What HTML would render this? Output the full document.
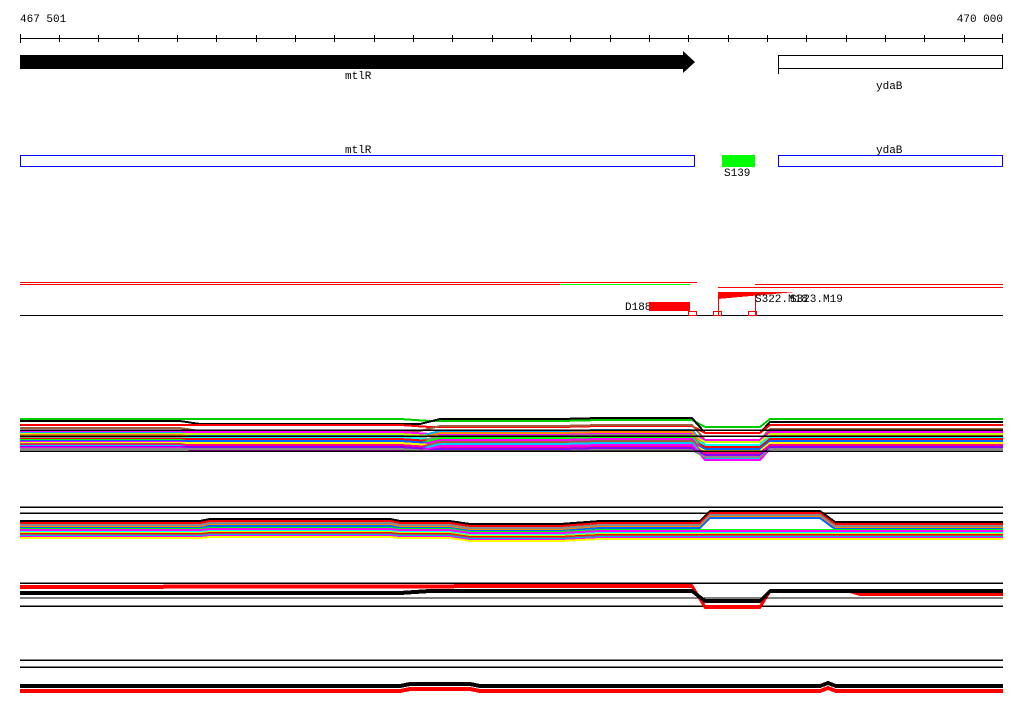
<!DOCTYPE html>
<html><head><meta charset="utf-8"><style>
html,body{margin:0;padding:0;background:#fff;width:1024px;height:714px;overflow:hidden}
svg{display:block}
text{font-family:"Liberation Mono","DejaVu Sans Mono",monospace;font-size:11px;fill:#000}
</style></head><body>
<svg width="1024" height="714" viewBox="0 0 1024 714" xmlns="http://www.w3.org/2000/svg" shape-rendering="crispEdges">
<defs>
<path id="a" d="M20,0 L180,0 L200,3 L420,3 L440,-2 L560,-2 L600,-3 L692,-3 L705,12 L760,12 L770,1 L1003,1" fill="none"/>
<path id="b" d="M20,0 L400,0 L430,2 L560,2 L600,1 L692,1 L705,8 L760,8 L770,0 L1003,0" fill="none"/>
<path id="c" d="M20,0 L200,0 L210,-2 L390,-2 L400,0 L450,0 L470,3 L560,3 L600,0 L700,0 L710,-10 L820,-10 L835,1 L1003,1" fill="none"/>
<path id="c2" d="M20,0 L200,0 L210,-1 L390,-1 L400,0 L450,0 L470,3 L560,3 L600,1 L1003,1" fill="none"/>
<path id="d" d="M20,0 L600,-1 L692,-1 L705,20 L760,20 L770,4 L850,4 L860,7 L1003,7" fill="none"/>
<path id="d2" d="M20,0 L400,0 L430,-2 L692,-2 L705,8 L760,8 L770,-2 L1003,-2" fill="none"/>
<path id="e" d="M20,0 L400,0 L410,-2 L470,-2 L480,0 L820,0 L828,-3 L836,0 L1003,0" fill="none"/>
</defs>
<!-- ruler -->
<text x="20" y="22">467 501</text>
<text x="1003" y="22" text-anchor="end">470 000</text>
<line x1="20" y1="38.5" x2="1003" y2="38.5" stroke="#000"/>
<g stroke="#000">
<line x1="20.5" y1="34" x2="20.5" y2="43"/><line x1="59.5" y1="35" x2="59.5" y2="42"/><line x1="98.5" y1="35" x2="98.5" y2="42"/><line x1="138.5" y1="35" x2="138.5" y2="42"/><line x1="177.5" y1="35" x2="177.5" y2="42"/><line x1="216.5" y1="35" x2="216.5" y2="42"/><line x1="256.5" y1="35" x2="256.5" y2="42"/><line x1="295.5" y1="35" x2="295.5" y2="42"/><line x1="334.5" y1="35" x2="334.5" y2="42"/><line x1="374.5" y1="35" x2="374.5" y2="42"/><line x1="413.5" y1="35" x2="413.5" y2="42"/><line x1="452.5" y1="35" x2="452.5" y2="42"/><line x1="492.5" y1="35" x2="492.5" y2="42"/><line x1="531.5" y1="35" x2="531.5" y2="42"/><line x1="570.5" y1="35" x2="570.5" y2="42"/><line x1="610.5" y1="35" x2="610.5" y2="42"/><line x1="649.5" y1="35" x2="649.5" y2="42"/><line x1="688.5" y1="35" x2="688.5" y2="42"/><line x1="728.5" y1="35" x2="728.5" y2="42"/><line x1="767.5" y1="35" x2="767.5" y2="42"/><line x1="806.5" y1="35" x2="806.5" y2="42"/><line x1="846.5" y1="35" x2="846.5" y2="42"/><line x1="885.5" y1="35" x2="885.5" y2="42"/><line x1="924.5" y1="35" x2="924.5" y2="42"/><line x1="964.5" y1="35" x2="964.5" y2="42"/><line x1="1002.5" y1="34" x2="1002.5" y2="43"/>
</g>
<!-- genes -->
<polygon points="20,55 683,55 683,51 695,62 683,73 683,69 20,69" fill="#000" shape-rendering="auto"/>
<text x="345" y="79">mtlR</text>
<rect x="778.5" y="55.5" width="224" height="13" fill="none" stroke="#000"/>
<line x1="778.5" y1="55" x2="778.5" y2="74" stroke="#000"/>
<text x="876" y="89">ydaB</text>
<rect x="20.5" y="155.5" width="674" height="11" fill="none" stroke="#00f"/>
<text x="345" y="153">mtlR</text>
<rect x="778.5" y="155.5" width="224" height="11" fill="none" stroke="#00f"/>
<text x="876" y="153">ydaB</text>
<rect x="722" y="155" width="33" height="12" fill="#0f0"/>
<text x="724" y="176">S139</text>
<!-- features row -->
<line x1="20" y1="282.5" x2="697" y2="282.5" stroke="#f00"/>
<line x1="20" y1="284.5" x2="560" y2="284.5" stroke="#f00"/>
<line x1="560" y1="284.5" x2="690" y2="284.5" stroke="#0f0"/>
<line x1="755" y1="284.5" x2="1003" y2="284.5" stroke="#f00"/>
<line x1="718" y1="287.5" x2="1003" y2="287.5" stroke="#f00"/>
<line x1="20" y1="315.5" x2="1003" y2="315.5" stroke="#000"/>
<text x="625" y="310">D188</text>
<rect x="649" y="302" width="41" height="9" fill="#f00"/>
<polygon points="718,292 795,292 718,299" fill="#f00"/>
<line x1="718.5" y1="292" x2="718.5" y2="315" stroke="#f00"/>
<line x1="755.5" y1="292" x2="755.5" y2="315" stroke="#f00"/>
<text x="755" y="302">S322.M18</text>
<text x="790" y="302">S323.M19</text>
<g fill="none" stroke="#f00">
<rect x="688.5" y="311.5" width="8" height="4"/><rect x="713.5" y="311.5" width="8" height="4"/><rect x="748.5" y="311.5" width="8" height="4"/>
</g>
<!-- cluster 1 -->
<g stroke-width="2">
<use href="#b" stroke="#0c0" transform="translate(0,419)"/>
<use href="#a" stroke="#000" transform="translate(0,421)"/>
<use href="#b" stroke="#f00" transform="translate(0,425)"/>
<use href="#a" stroke="#a06040" transform="translate(0,428)"/>
<use href="#b" stroke="#f0f" transform="translate(0,432)"/>
<use href="#a" stroke="#0af" transform="translate(0,433)"/>
<use href="#b" stroke="#c8ff00" transform="translate(0,434)"/>
<use href="#a" stroke="#f80" transform="translate(0,435)"/>
<use href="#b" stroke="#0ff" transform="translate(0,437)"/>
<use href="#a" stroke="#888" transform="translate(0,438)"/>
<use href="#b" stroke="#f00" transform="translate(0,439)"/>
<use href="#a" stroke="#0f0" transform="translate(0,440)"/>
<use href="#b" stroke="#06f" transform="translate(0,441)"/>
<use href="#a" stroke="#f0f" transform="translate(0,442)"/>
<use href="#b" stroke="#ff0" transform="translate(0,443)"/>
<use href="#a" stroke="#a06040" transform="translate(0,444)"/>
<use href="#b" stroke="#f08" transform="translate(0,445)"/>
<use href="#a" stroke="#0cf" transform="translate(0,446)"/>
<use href="#b" stroke="#80f" transform="translate(0,447)"/>
<use href="#a" stroke="#f0f" transform="translate(0,448)"/>
<use href="#b" stroke="#888" transform="translate(0,449)"/>
</g>
<g stroke="#000" stroke-width="1.5">
<line x1="20" y1="430" x2="1003" y2="430"/><line x1="20" y1="436" x2="1003" y2="436"/><line x1="20" y1="451" x2="1003" y2="451"/>
</g>
<!-- cluster 2 -->
<g stroke="#000" stroke-width="1.5"><line x1="20" y1="507" x2="1003" y2="507"/><line x1="20" y1="513" x2="1003" y2="513"/></g>
<g stroke-width="2">
<use href="#c" stroke="#000" transform="translate(0,521)"/>
<use href="#c" stroke="#f00" transform="translate(0,523)"/>
<use href="#c" stroke="#888" transform="translate(0,525)"/>
<use href="#c" stroke="#f80" transform="translate(0,527)"/>
<use href="#c" stroke="#06f" transform="translate(0,528)"/>
<use href="#c2" stroke="#0f0" transform="translate(0,529)"/>
<use href="#c2" stroke="#f0f" transform="translate(0,530)"/>
<use href="#c2" stroke="#0ff" transform="translate(0,532)"/>
<use href="#c2" stroke="#c8ff00" transform="translate(0,533)"/>
<use href="#c2" stroke="#f00" transform="translate(0,534)"/>
<use href="#c2" stroke="#a06040" transform="translate(0,535)"/>
<use href="#c2" stroke="#0af" transform="translate(0,536)"/>
<use href="#c2" stroke="#f0f" transform="translate(0,537)"/>
<use href="#c2" stroke="#ff0" transform="translate(0,538)"/>
</g>
<!-- cluster 3 -->
<g stroke="#000" stroke-width="1.5"><line x1="20" y1="583" x2="1003" y2="583"/><line x1="20" y1="606" x2="1003" y2="606"/></g>
<g stroke-width="2">
<use href="#d" stroke="#f00" transform="translate(0,586)"/>
<use href="#d" stroke="#f00" transform="translate(0,588)"/>
<use href="#d2" stroke="#000" transform="translate(0,592)"/>
<use href="#d2" stroke="#000" transform="translate(0,594)"/>
</g>
<line x1="20" y1="598" x2="1003" y2="598" stroke="#000"/>
<!-- cluster 4 -->
<g stroke="#000" stroke-width="1.5"><line x1="20" y1="660" x2="1003" y2="660"/><line x1="20" y1="667" x2="1003" y2="667"/></g>
<g stroke-width="2">
<use href="#e" stroke="#000" transform="translate(0,685)"/>
<use href="#e" stroke="#000" transform="translate(0,687)"/>
<use href="#e" stroke="#f00" transform="translate(0,690)"/>
<use href="#e" stroke="#f00" transform="translate(0,692)"/>
</g>
</svg>
</body></html>
